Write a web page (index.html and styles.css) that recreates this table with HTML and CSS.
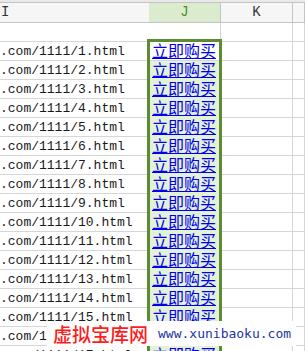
FILE: index.html
```html
<!DOCTYPE html>
<html>
<head>
<meta charset="utf-8">
<link rel="stylesheet" href="styles.css">
</head>
<body>
<div class="sheet">
  <div class="topbar"></div>
  <div class="row header">
    <div class="cell ci">I</div>
    <div class="cell cj hl">J</div>
    <div class="cell ck">K</div>
    <div class="cell cl"></div>
  </div>
  <div class="row">
    <div class="cell ci"></div>
    <div class="cell cj"></div>
    <div class="cell ck"></div>
    <div class="cell cl"></div>
  </div>
  <div class="row"><div class="cell ci">.com/1111/1.html</div><div class="cell cj active"><a href="#">立即购买</a></div><div class="cell ck"></div><div class="cell cl"></div></div>
  <div class="row"><div class="cell ci">.com/1111/2.html</div><div class="cell cj sel"><a href="#">立即购买</a></div><div class="cell ck"></div><div class="cell cl"></div></div>
  <div class="row"><div class="cell ci">.com/1111/3.html</div><div class="cell cj sel"><a href="#">立即购买</a></div><div class="cell ck"></div><div class="cell cl"></div></div>
  <div class="row"><div class="cell ci">.com/1111/4.html</div><div class="cell cj sel"><a href="#">立即购买</a></div><div class="cell ck"></div><div class="cell cl"></div></div>
  <div class="row"><div class="cell ci">.com/1111/5.html</div><div class="cell cj sel"><a href="#">立即购买</a></div><div class="cell ck"></div><div class="cell cl"></div></div>
  <div class="row"><div class="cell ci">.com/1111/6.html</div><div class="cell cj sel"><a href="#">立即购买</a></div><div class="cell ck"></div><div class="cell cl"></div></div>
  <div class="row"><div class="cell ci">.com/1111/7.html</div><div class="cell cj sel"><a href="#">立即购买</a></div><div class="cell ck"></div><div class="cell cl"></div></div>
  <div class="row"><div class="cell ci">.com/1111/8.html</div><div class="cell cj sel"><a href="#">立即购买</a></div><div class="cell ck"></div><div class="cell cl"></div></div>
  <div class="row"><div class="cell ci">.com/1111/9.html</div><div class="cell cj sel"><a href="#">立即购买</a></div><div class="cell ck"></div><div class="cell cl"></div></div>
  <div class="row"><div class="cell ci">.com/1111/10.html</div><div class="cell cj sel"><a href="#">立即购买</a></div><div class="cell ck"></div><div class="cell cl"></div></div>
  <div class="row"><div class="cell ci">.com/1111/11.html</div><div class="cell cj sel"><a href="#">立即购买</a></div><div class="cell ck"></div><div class="cell cl"></div></div>
  <div class="row"><div class="cell ci">.com/1111/12.html</div><div class="cell cj sel"><a href="#">立即购买</a></div><div class="cell ck"></div><div class="cell cl"></div></div>
  <div class="row"><div class="cell ci">.com/1111/13.html</div><div class="cell cj sel"><a href="#">立即购买</a></div><div class="cell ck"></div><div class="cell cl"></div></div>
  <div class="row"><div class="cell ci">.com/1111/14.html</div><div class="cell cj sel"><a href="#">立即购买</a></div><div class="cell ck"></div><div class="cell cl"></div></div>
  <div class="row"><div class="cell ci">.com/1111/15.html</div><div class="cell cj sel"><a href="#">立即购买</a></div><div class="cell ck"></div><div class="cell cl"></div></div>
  <div class="row"><div class="cell ci">.com/1111/16.html</div><div class="cell cj sel"><a href="#">立即购买</a></div><div class="cell ck"></div><div class="cell cl"></div></div>
  <div class="row"><div class="cell ci">.com/1111/17.html</div><div class="cell cj sel"><a href="#">立即购买</a></div><div class="cell ck"></div><div class="cell cl"></div></div>
  <div class="selection"></div>
  <div class="watermark">
    <span class="wm-cn">虚拟宝库网</span>
    <span class="wm-url">www.xunibaoku.com</span>
  </div>
</div>
</body>
</html>
```
FILE: styles.css
```css
html, body {
  margin: 0;
  padding: 0;
  background: #ffffff;
  overflow: hidden;
}
.sheet {
  position: relative;
  width: 305px;
  height: 351px;
  overflow: hidden;
}
.topbar {
  height: 2px;
  background: #e9e9e9;
  border-bottom: 1px solid #c4c4c4;
}
.row {
  display: grid;
  grid-template-columns: 149px 72px 72px 1fr;
  height: 19px;
  border-bottom: 1px solid #d6d6d6;
  box-sizing: content-box;
  height: 18px;
}
.row.header {
  height: 19px;
  background: #f6f6f6;
  border-bottom: 1px solid #c4c4c4;
}
.cell {
  box-sizing: border-box;
  border-right: 1px solid #d6d6d6;
  white-space: nowrap;
  overflow: visible;
  font-family: "Liberation Mono", "DejaVu Sans Mono", monospace;
  font-size: 13px;
  line-height: 18px;
  color: #1a1a1a;
  padding-top: 1px;
}
.header .cell {
  border-right-color: #c4c4c4;
  font-family: "Liberation Mono", monospace;
  font-size: 14px;
  line-height: 19px;
  padding-top: 0;
  color: #333333;
  text-align: center;
}
.header .ci {
  text-align: left;
  padding-left: 1px;
}
.header .hl {
  background: #dbecce;
  color: #4c8a2e;
}
.ci {
  border-right: none;
  position: relative;
  z-index: 1;
}
.cj.sel {
  background: #e3f1d8;
}
.cj a {
  font-family: "Noto Sans CJK SC", sans-serif;
  font-size: 16px;
  line-height: 17px;
  color: #0000ee;
  text-decoration: underline;
  text-underline-offset: 1px;
  padding-left: 3px;
  display: inline-block;
  margin-top: -1px;
}
.selection {
  position: absolute;
  left: 147px;
  top: 39px;
  width: 75px;
  height: 400px;
  box-sizing: border-box;
  border: 3px solid #5b8c33;
  z-index: 2;
}
.watermark {
  position: absolute;
  left: 47px;
  top: 321px;
  width: 249px;
  height: 25px;
  background: #ffffff;
  display: flex;
  align-items: center;
  gap: 10px;
  padding-left: 6px;
  box-sizing: border-box;
  z-index: 3;
}
.wm-cn {
  font-family: "Noto Sans CJK SC", sans-serif;
  font-size: 19px;
  line-height: 25px;
  color: #ff1c1c;
  font-weight: 500;
}
.wm-url {
  font-family: "DejaVu Sans Mono", monospace;
  font-size: 13px;
  color: #2233a0;
  line-height: 25px;
}
```
